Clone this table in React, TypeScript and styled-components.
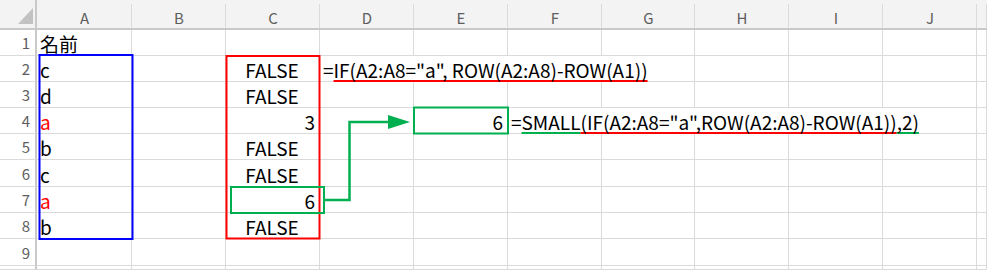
import React from 'react'
import styled, { createGlobalStyle } from 'styled-components'

const GlobalStyle = createGlobalStyle`
  html, body {
    margin: 0;
    padding: 0;
    background: #ffffff;
  }
  body {
    font-family: 'Noto Sans CJK JP', 'Noto Sans', sans-serif;
  }
`

const COLS = ['A', 'B', 'C', 'D', 'E', 'F', 'G', 'H', 'I', 'J']
const COL_WIDTHS = [95, 94, 94, 94, 94, 94, 93, 94, 94, 94]
const ROW_HEIGHTS = [26, 26, 26, 26, 26, 27, 26, 26, 27]
const HEADER_H = 30
const ROWHEAD_W = 37

const GRID = '#dadada'
const HEAD_LINE = '#c9c9c9'
const GREEN = '#00b050'
const RED = '#ff0000'
const BLUE = '#0000ff'

type Align = 'left' | 'center' | 'right'
type Tone = 'red' | 'green'

type CellDef = {
  col: string
  content: React.ReactNode
  align?: Align
  color?: string
  span?: number
}

const Sheet = styled.div`
  position: relative;
  display: grid;
  grid-template-columns: ${ROWHEAD_W}px ${COL_WIDTHS.map((w) => `${w}px`).join(' ')} 1fr;
  grid-template-rows: ${HEADER_H}px ${ROW_HEIGHTS.map((h) => `${h}px`).join(' ')} 1fr;
  width: 987px;
  height: 270px;
  overflow: hidden;
  background: #ffffff;
`

const Corner = styled.div`
  position: relative;
  background: #f3f3f3;
  border-right: 2px solid ${HEAD_LINE};
  border-bottom: 2px solid ${HEAD_LINE};
`

const CornerMark = styled.svg`
  position: absolute;
  left: 0;
  top: 0;
`

const ColHead = styled.div`
  position: relative;
  display: flex;
  align-items: flex-end;
  justify-content: center;
  padding-bottom: 3px;
  background: #f3f3f3;
  border-bottom: 2px solid ${HEAD_LINE};
  color: #5e5e5e;
  font-size: 15px;
  line-height: 1;

  &::after {
    content: '';
    position: absolute;
    right: 0;
    top: 4px;
    bottom: 0;
    width: 1px;
    background: ${GRID};
  }
`

const RowHead = styled.div`
  display: flex;
  align-items: center;
  justify-content: flex-end;
  padding-right: 5px;
  border-right: 2px solid ${HEAD_LINE};
  border-bottom: 1px solid ${GRID};
  color: #5e5e5e;
  font-size: 15px;
  line-height: 1;
`

const Cell = styled.div<{ $align: Align; $color: string; $span: number }>`
  grid-column: span ${({ $span }) => $span};
  display: flex;
  align-items: flex-end;
  justify-content: ${({ $align }) =>
    $align === 'center' ? 'center' : $align === 'right' ? 'flex-end' : 'flex-start'};
  padding: 0 4px 2px 3px;
  border-right: 1px solid ${GRID};
  border-bottom: 1px solid ${GRID};
  color: ${({ $color }) => $color};
  font-size: 19px;
  line-height: 1;
  white-space: nowrap;
  overflow: visible;
`

const Mark = styled.span<{ $tone: Tone }>`
  text-decoration: underline;
  text-decoration-color: ${({ $tone }) => ($tone === 'red' ? RED : GREEN)};
  text-decoration-thickness: 2px;
  text-underline-offset: 2px;
  text-decoration-skip-ink: none;
`

const Overlay = styled.svg`
  position: absolute;
  left: 0;
  top: 0;
  pointer-events: none;
`

const ROWS: CellDef[][] = [
  [{ col: 'A', content: '名前' }],
  [
    { col: 'A', content: 'c' },
    { col: 'C', content: 'FALSE', align: 'center' },
    {
      col: 'D',
      span: 4,
      content: (
        <>
          =<Mark $tone="red">IF(A2:A8="a", ROW(A2:A8)-ROW(A1))</Mark>
        </>
      ),
    },
  ],
  [
    { col: 'A', content: 'd' },
    { col: 'C', content: 'FALSE', align: 'center' },
  ],
  [
    { col: 'A', content: 'a', color: RED },
    { col: 'C', content: '3', align: 'right' },
    { col: 'E', content: '6', align: 'right' },
    {
      col: 'F',
      span: 5,
      content: (
        <>
          =<Mark $tone="green">SMALL</Mark>
          <Mark $tone="red">(IF(A2:A8="a",ROW(A2:A8)-ROW(A1))</Mark>
          <Mark $tone="green">,2)</Mark>
        </>
      ),
    },
  ],
  [
    { col: 'A', content: 'b' },
    { col: 'C', content: 'FALSE', align: 'center' },
  ],
  [
    { col: 'A', content: 'c' },
    { col: 'C', content: 'FALSE', align: 'center' },
  ],
  [
    { col: 'A', content: 'a', color: RED },
    { col: 'C', content: '6', align: 'right' },
  ],
  [
    { col: 'A', content: 'b' },
    { col: 'C', content: 'FALSE', align: 'center' },
  ],
  [],
]

// one row of cells, skipping the columns that a spilled formula covers
const renderRow = (defs: CellDef[], r: number) => {
  const out: React.ReactNode[] = []
  let i = 0
  while (i < COLS.length) {
    const def = defs.find((d) => d.col === COLS[i])
    const span = def?.span ?? 1
    out.push(
      <Cell
        key={`${r}-${COLS[i]}`}
        $span={span}
        $align={def?.align ?? 'left'}
        $color={def?.color ?? '#000000'}
      >
        {def?.content}
      </Cell>
    )
    i += span
  }
  out.push(<Cell key={`${r}-K`} $span={1} $align="left" $color="#000000" />)
  return out
}

const Annotations: React.FC = () => (
  <Overlay width={987} height={270} viewBox="0 0 987 270">
    <rect x={39.5} y={55} width={93} height={184} fill="none" stroke={BLUE} strokeWidth={2} />
    <rect x={226.5} y={56} width={93} height={182.5} fill="none" stroke={RED} strokeWidth={2} />
    <rect x={231} y={187} width={93} height={26} fill="none" stroke={GREEN} strokeWidth={2} />
    <rect x={414} y={107.5} width={94} height={26} fill="none" stroke={GREEN} strokeWidth={2} />
    <polyline
      points="324,200 349.5,200 349.5,122 390,122"
      fill="none"
      stroke={GREEN}
      strokeWidth={2.5}
    />
    <polygon points="388,115 410,122 388,129" fill={GREEN} />
  </Overlay>
)

const App: React.FC = () => {
  return (
    <>
      <GlobalStyle />
      <Sheet>
        <Corner>
          <CornerMark width={35} height={28} viewBox="0 0 35 28">
            <polygon points="33,8 33,24 18,24" fill="#c2c2c2" />
          </CornerMark>
        </Corner>
        {COLS.map((c) => (
          <ColHead key={c}>{c}</ColHead>
        ))}
        <ColHead />
        {ROW_HEIGHTS.map((_, r) => (
          <React.Fragment key={r}>
            <RowHead>{r + 1}</RowHead>
            {renderRow(ROWS[r] ?? [], r)}
          </React.Fragment>
        ))}
        {/* partly visible row below the last numbered one */}
        <RowHead />
        {renderRow([], ROW_HEIGHTS.length)}
        <Annotations />
      </Sheet>
    </>
  )
}

export default App
